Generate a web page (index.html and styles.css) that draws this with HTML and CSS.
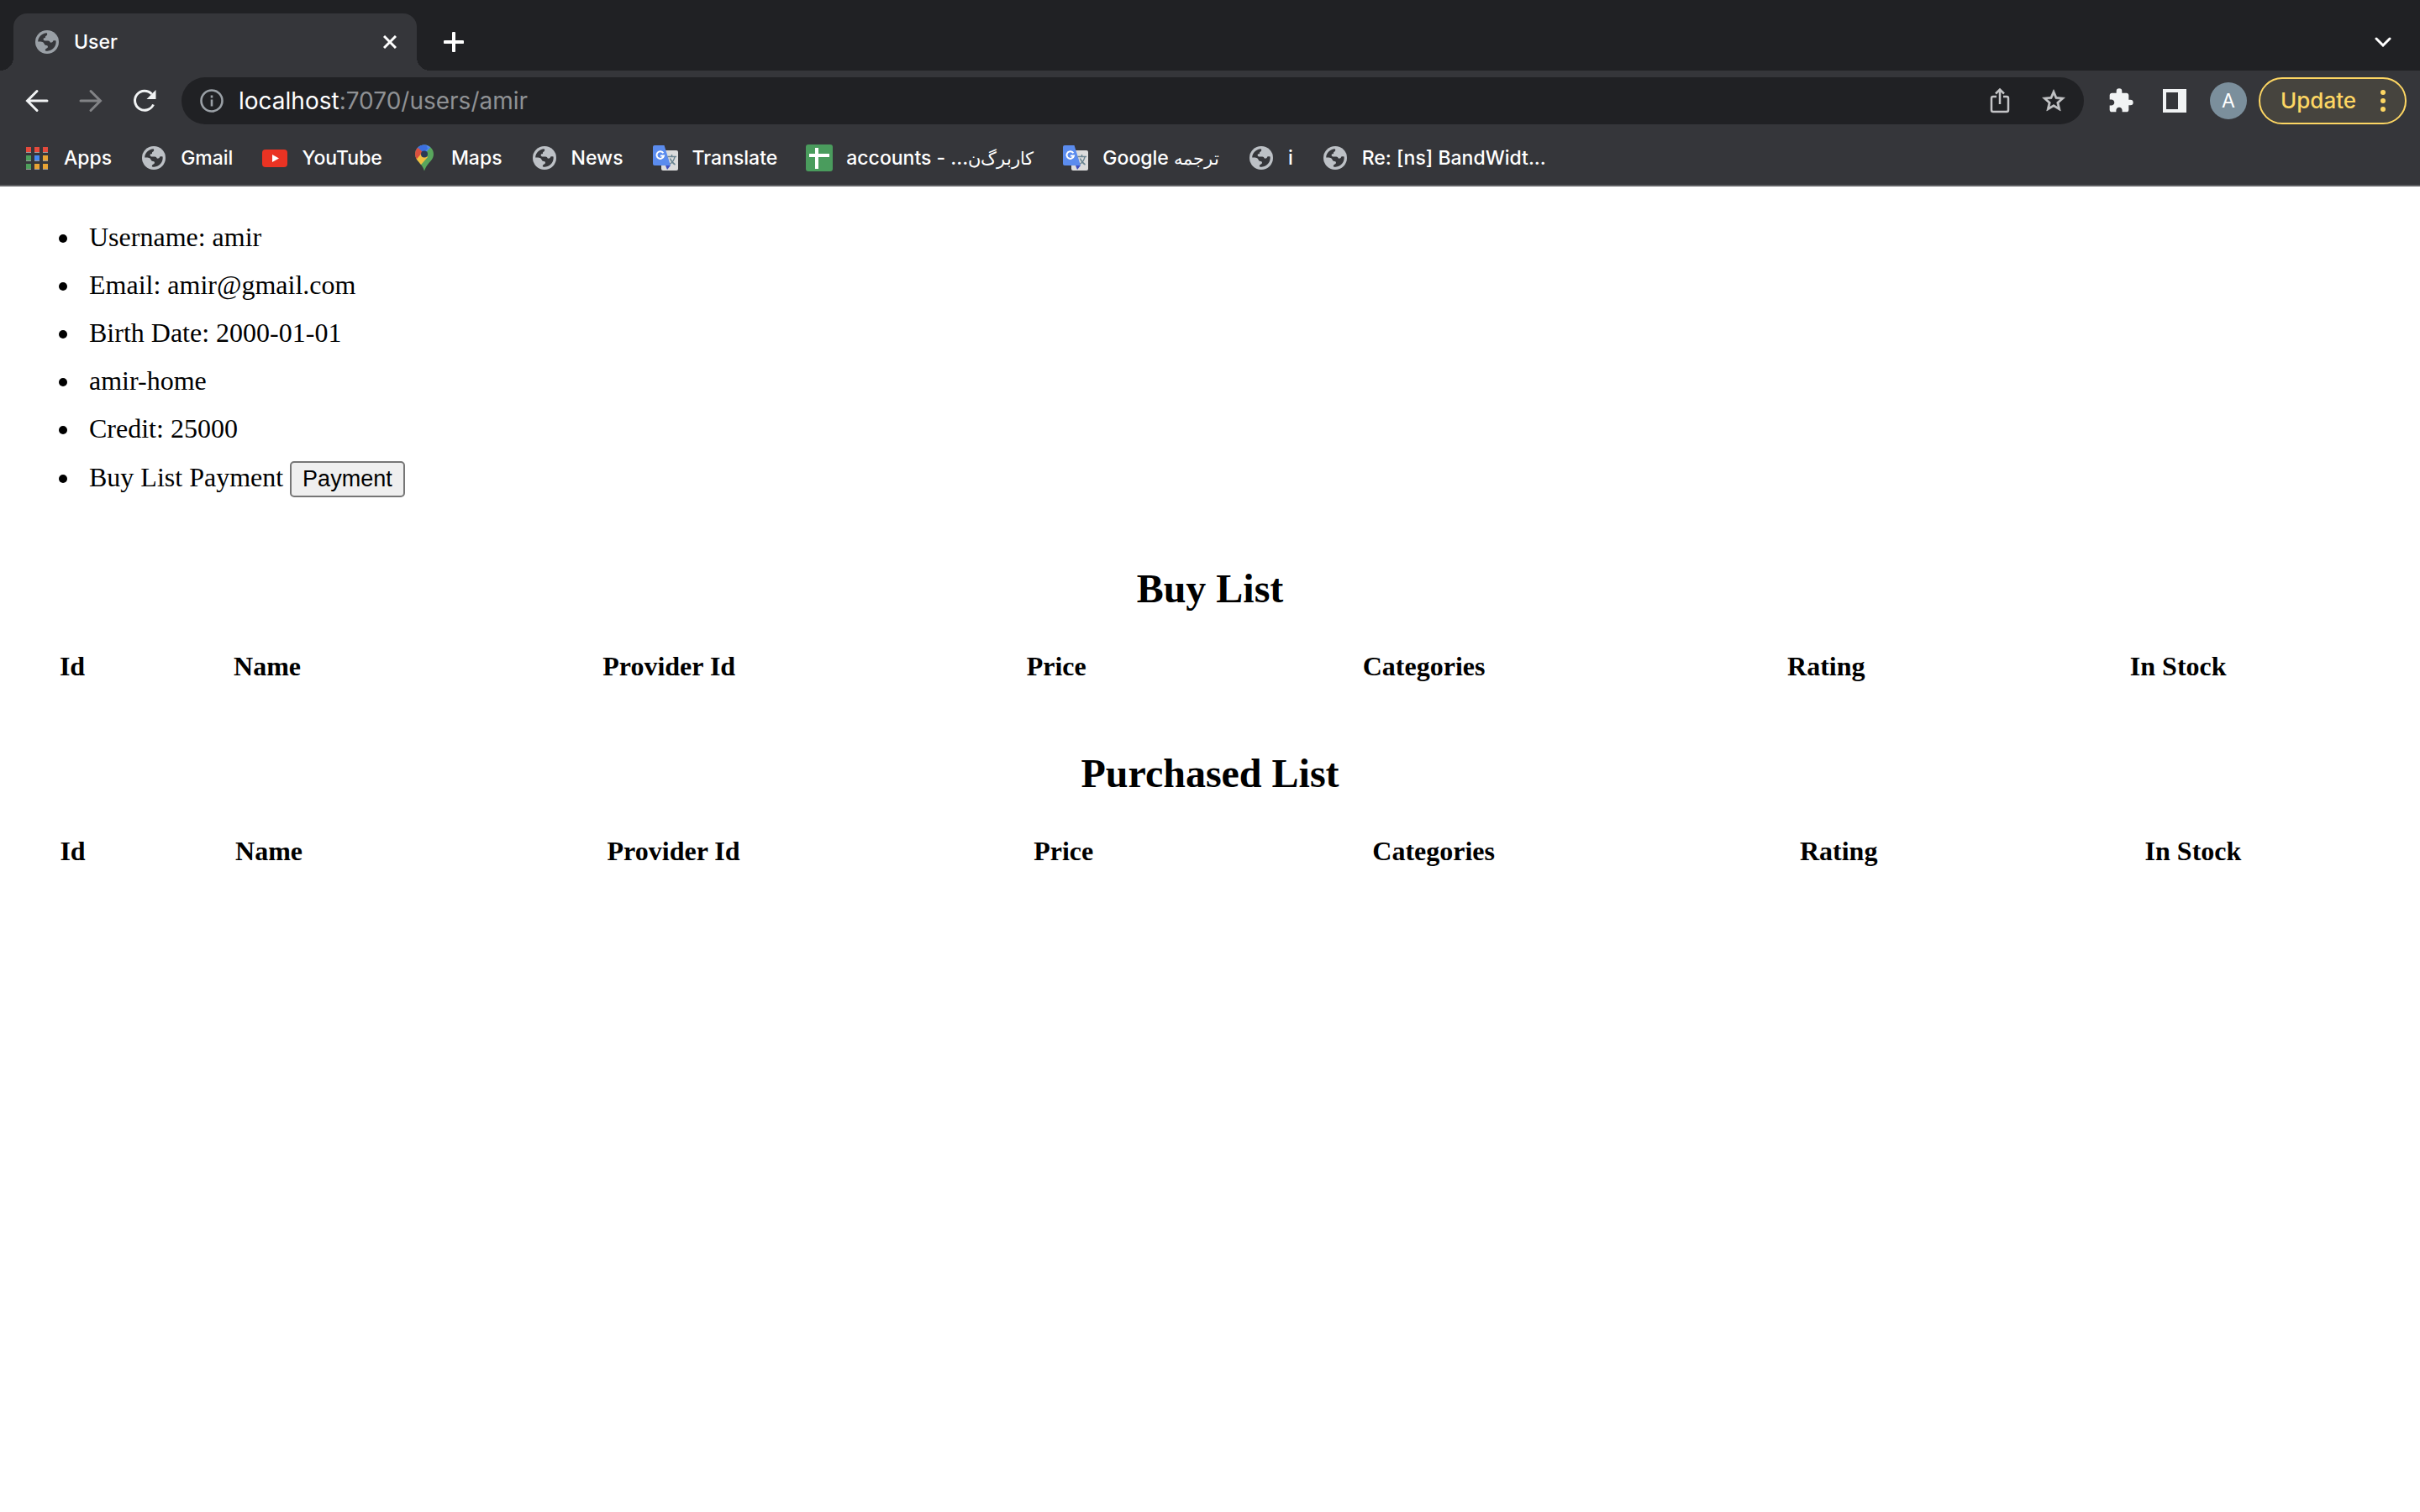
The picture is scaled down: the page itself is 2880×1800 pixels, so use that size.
FILE: index.html
```html
<!DOCTYPE html>
<html lang="en">
<head>
<meta charset="utf-8">
<title>User</title>
<link rel="stylesheet" href="styles.css">
</head>
<body>
<svg class="defs" aria-hidden="true">
  <symbol id="globe" viewBox="0 0 28 28">
    <circle cx="14" cy="14" r="14" fill="currentColor"/>
    <path class="cut" d="M3.2 13.6C3.2 8 8 3.4 13.6 3.2c1 .6.8 2.600-.4 3.200-1.600.8-1.200 1.600-1.200 2.600-1 .2-2.400.2-2.400 1.600 0 1.200.6 1.800 1.800 1.800h3.800c1.600 0 2.400 1.200 2.600 2.200 1.800.2 3-.4 3.200-1.600.2-1 1.800-1 3.600-.4.8 6-3.600 11.800-10.200 12.200-1.800 0-2.800-.4-2.600-1.400.2-1.400 2.200-1.600 3-2.800.6-1.200-.2-2.600-1.600-2.600-2 0-2.200-1.600-3-2.600-.8-1-2.200-1.800-3.800-1.800z"/>
  </symbol>
  <symbol id="translate" viewBox="0 0 30 30">
    <rect x="10" y="6" width="20" height="24" rx="2" fill="#dcdcdc"/>
    <path d="M15 24h6l-4 5z" fill="#3f4fc0"/>
    <path d="M2 0h11.500L21 24H2a2 2 0 0 1-2-2V2a2 2 0 0 1 2-2z" fill="#5b8cee"/>
    <path d="M12.400 9.200A4.300 4.300 0 1 0 13 12.500H9" fill="none" stroke="#fff" stroke-width="2"/>
    <path d="M17.500 13.500H28M22.500 11v2.500M26 13.500c-.5 3.500-3 7-6 9M20.500 15.500c1 3 3.500 6 6 7.500" fill="none" stroke="#6b8591" stroke-width="1.500"/>
  </symbol>
</svg>
<header class="browser">
  <div class="tabstrip">
    <div class="tab">
      <svg class="tab-icon"><use href="#globe"/></svg>
      <span class="tab-title">User</span>
      <button class="plain" aria-label="Close tab"><svg width="16" height="16" viewBox="0 0 16 16"><path d="M1 1l14 14M15 1L1 15" stroke="#fff" stroke-width="3"/></svg></button>
    </div>
    <button class="plain new-tab" aria-label="New tab"><svg width="24" height="24" viewBox="0 0 24 24"><path d="M12 1.500v21M1.500 12h21" stroke="#fff" stroke-width="4" stroke-linecap="round"/></svg></button>
    <button class="plain tab-search" aria-label="Search tabs"><svg width="20" height="12" viewBox="0 0 20 12"><path d="M2 2l8 8 8-8" fill="none" stroke="#fff" stroke-width="3" stroke-linecap="round"/></svg></button>
  </div>
  <div class="toolbar">
    <div class="nav">
      <button class="plain" aria-label="Back"><svg width="28" height="28" viewBox="0 0 28 28"><path d="M26 14H3M14 2.500L2.500 14 14 25.500" fill="none" stroke="#f1f3f4" stroke-width="3" stroke-linecap="round"/></svg></button>
      <button class="plain" aria-label="Forward"><svg width="28" height="28" viewBox="0 0 28 28"><path d="M2 14h23M14 2.500L25.500 14 14 25.500" fill="none" stroke="#828386" stroke-width="3" stroke-linecap="round"/></svg></button>
      <button class="plain" aria-label="Reload"><svg width="28" height="28" viewBox="0 0 28 28"><path d="M24.500 18.500A11.500 11.500 0 1 1 22.500 6" fill="none" stroke="#f1f3f4" stroke-width="3"/><path d="M27.500 1v11h-11z" fill="#f1f3f4"/></svg></button>
    </div>
    <div class="omnibox">
      <svg width="28" height="28" viewBox="0 0 28 28"><circle cx="14" cy="14" r="12.500" fill="none" stroke="#9aa0a6" stroke-width="2.600"/><path d="M14 12.500v8M14 7.500v3" stroke="#9aa0a6" stroke-width="2.600"/></svg>
      <div class="url"><span class="host">localhost</span>:7070/users/amir</div>
      <button class="plain" aria-label="Share"><svg width="24" height="32" viewBox="0 0 24 32"><path d="M8 11H4a2 2 0 0 0-2 2v14a2 2 0 0 0 2 2h16a2 2 0 0 0 2-2V13a2 2 0 0 0-2-2h-4M12 20V3M7 7.500l5-5 5 5" fill="none" stroke="#c3c4c6" stroke-width="2.500"/></svg></button>
      <button class="plain star" aria-label="Bookmark this page"><svg width="32" height="32" viewBox="0 0 24 24"><path d="M22 9.240l-7.190-.620L12 2 9.190 8.630 2 9.240l5.460 4.730L5.820 21 12 17.270 18.180 21l-1.630-7.030zM12 15.400l-3.760 2.270 1-4.280-3.320-2.880 4.380-.380L12 6.100l1.710 4.040 4.380.380-3.320 2.880 1 4.280z" fill="#c3c4c6" stroke="#c3c4c6" stroke-width=".5"/></svg></button>
    </div>
    <button class="plain" aria-label="Extensions"><svg width="32" height="32" viewBox="0 0 24 24"><path d="M20.500 11H19V7c0-1.100-.9-2-2-2h-4V3.500a2.500 2.500 0 0 0-5 0V5H4c-1.100 0-1.990.9-1.990 2v3.800H3.500c1.490 0 2.700 1.210 2.700 2.700s-1.210 2.700-2.700 2.700H2V20c0 1.100.9 2 2 2h3.800v-1.500c0-1.490 1.210-2.700 2.700-2.700s2.700 1.210 2.700 2.700V22H17c1.100 0 2-.9 2-2v-4h1.500a2.500 2.500 0 0 0 0-5z" fill="#f1f3f4"/></svg></button>
    <button class="plain" aria-label="Side panel"><svg width="28" height="28" viewBox="0 0 28 28"><path d="M0 0h28v28H0zM4 4v20h14V4z" fill="#f1f3f4" fill-rule="evenodd"/></svg></button>
    <button class="avatar" aria-label="Profile">A</button>
    <button class="update">Update<svg width="6" height="26" viewBox="0 0 6 26"><g fill="#fdd663"><circle cx="3" cy="3" r="3"/><circle cx="3" cy="13" r="3"/><circle cx="3" cy="23" r="3"/></g></svg></button>
  </div>
  <nav class="bookmarks">
    <a href="#"><svg viewBox="0 0 32 32"><path d="M3 9h6v1H3zM13 9h6v1h-6zM23 9h6v1h-6zM3 19h6v1H3zM13 19h6v1h-6zM23 19h6v1h-6zM3 29h6v1H3zM13 29h6v1h-6zM23 29h6v1h-6z" fill="#9a9b9d"/><path d="M3 3h6v6H3zM13 3h6v6h-6zM23 3h6v6h-6z" fill="#e44a3c"/><path d="M3 13h6v6H3zM3 23h6v6H3z" fill="#4e9e5b"/><path d="M13 13h6v6h-6z" fill="#4588f0"/><path d="M23 13h6v6h-6zM13 23h6v6h-6zM23 23h6v6h-6z" fill="#e8a334"/></svg>Apps</a>
    <a href="#"><svg class="globe" viewBox="-2 -2 32 32"><use href="#globe" width="28" height="28"/></svg>Gmail</a>
    <a href="#"><svg viewBox="0 0 32 32"><rect x="1" y="6" width="30" height="21" rx="4" fill="#ea3323"/><path d="M13 12v9l8-4.500z" fill="#fff"/></svg>YouTube</a>
    <a href="#"><svg viewBox="0 0 32 32"><clipPath id="pin"><path d="M16 0.500a11 11 0 0 1 11 11c0 8-8 10-11 20-3-10-11-12-11-20a11 11 0 0 1 11-11z"/></clipPath><g clip-path="url(#pin)"><path d="M0 0h32v32H0z" fill="#58a65c"/><path d="M16 11.500L30-4H5l-1 6z" fill="#4f86ec"/><path d="M4 0h14l2 5-8 8-9-7z" fill="#3b6fe0"/><path d="M14 9l6 6-10.500 12L4 18z" fill="#f2bf42"/><path d="M3 0l5.500 4L14 9 5.500 19 3 18z" fill="#d9503f"/></g><circle cx="16" cy="11.500" r="4" fill="#2d3a55"/></svg>Maps</a>
    <a href="#"><svg class="globe" viewBox="-2 -2 32 32"><use href="#globe" width="28" height="28"/></svg>News</a>
    <a href="#"><svg viewBox="-1 -1 32 32"><use href="#translate" width="30" height="30"/></svg>Translate</a>
    <a href="#"><svg viewBox="0 0 32 32"><rect width="32" height="32" rx="3" fill="#4a9c5d"/><path d="M13 4v25M4 13h24" stroke="#fff" stroke-width="4"/></svg><span>accounts - ...<bdi>کاربرگ‌ن</bdi></span></a>
    <a href="#"><svg viewBox="-1 -1 32 32"><use href="#translate" width="30" height="30"/></svg><span>Google <bdi>ترجمه</bdi></span></a>
    <a href="#"><svg class="globe" viewBox="-2 -2 32 32"><use href="#globe" width="28" height="28"/></svg>i</a>
    <a href="#"><svg class="globe" viewBox="-2 -2 32 32"><use href="#globe" width="28" height="28"/></svg>Re: [ns] BandWidt...</a>
  </nav>
</header>
<main class="page">
  <ul class="profile">
    <li>Username: amir</li>
    <li>Email: amir@gmail.com</li>
    <li>Birth Date: 2000-01-01</li>
    <li>amir-home</li>
    <li>Credit: 25000</li>
    <li><label for="pay">Buy List Payment</label> <button id="pay" class="pay">Payment</button></li>
  </ul>
  <table class="list">
    <caption>Buy List</caption>
    <thead><tr><th>Id</th><th>Name</th><th>Provider Id</th><th>Price</th><th>Categories</th><th>Rating</th><th>In Stock</th><th></th><th></th></tr></thead>
  </table>
  <table class="list">
    <caption>Purchased List</caption>
    <thead><tr><th>Id</th><th>Name</th><th>Provider Id</th><th>Price</th><th>Categories</th><th>Rating</th><th>In Stock</th><th></th></tr></thead>
  </table>
</main>
</body>
</html>
```
FILE: styles.css
```css
* { box-sizing: border-box; }
body {
  margin: 0;
  background: #fff;
  color: #000;
  font: 32px/37px "Liberation Serif", "Times New Roman", serif;
}
.defs { position: absolute; width: 0; height: 0; }
svg { display: block; flex: none; }
.cut { fill: #35363a; }

/* Browser chrome */
.browser {
  background: #35363a;
  border-bottom: 2px solid #5f6063;
  color: #fff;
  font: 500 23px/32px Inter, "Noto Sans", sans-serif;
}
.plain {
  display: flex;
  padding: 0;
  border: 0;
  background: none;
}
.tabstrip {
  display: flex;
  align-items: center;
  height: 84px;
  padding: 16px 34px 0 16px;
  background: #202124;
}
.tab {
  position: relative;
  display: flex;
  align-items: center;
  gap: 18px;
  width: 480px;
  height: 68px;
  padding: 0 24px 0 26px;
  border-radius: 16px 16px 0 0;
  background: #35363a;
}
.tab::before,
.tab::after {
  content: "";
  position: absolute;
  bottom: 0;
  width: 16px;
  height: 16px;
}
.tab::before { right: 100%; background: radial-gradient(circle at 0 0, #202124 16px, #35363a 16px); }
.tab::after { left: 100%; background: radial-gradient(circle at 100% 0, #202124 16px, #35363a 16px); }
.tab-icon { width: 28px; height: 28px; color: #9aa0a6; }
.tab-title { flex: 1; }
.new-tab { margin-left: 32px; }
.tab-search { margin-left: auto; }

.toolbar {
  display: flex;
  align-items: center;
  height: 72px;
  padding: 0 16px 0 30px;
}
.nav { display: flex; gap: 36px; margin-right: 30px; }
.omnibox {
  flex: 1;
  display: flex;
  align-items: center;
  height: 56px;
  margin-right: 28px;
  padding: 0 20px 0 22px;
  border-radius: 28px;
  background: #202124;
  font-size: 28px;
  font-weight: 400;
}
.url { flex: 1; margin-left: 18px; color: #8f9194; }
.host { color: #fff; }
.star { margin-left: 36px; }
.avatar {
  width: 44px;
  height: 44px;
  margin: 0 14px 0 28px;
  padding: 0;
  border: 0;
  border-radius: 50%;
  background: #7b8f9c;
  color: #fff;
  font: 23px/44px Inter, sans-serif;
}
.toolbar > .plain + .plain { margin-left: 34px; }
.update {
  display: flex;
  align-items: center;
  justify-content: space-between;
  width: 176px;
  height: 56px;
  padding: 0 23px 0 24px;
  border: 2px solid #fdd663;
  border-radius: 28px;
  background: #46443e;
  color: #fdd663;
  font: 500 26px/32px Inter, sans-serif;
}
.bookmarks {
  display: flex;
  align-items: center;
  gap: 34px;
  height: 64px;
  padding: 0 28px;
}
.bookmarks a {
  display: flex;
  align-items: center;
  gap: 16px;
  color: #fff;
  text-decoration: none;
  white-space: nowrap;
}
.bookmarks svg { width: 32px; height: 32px; }
.bookmarks .globe { color: #bdc1c6; }
.bookmarks bdi { font-size: 21px; }

/* Page */
.page { padding: 32px 16px; }
.profile { margin: 0; padding: 10px 0 6px 80px; }
.profile li { margin-bottom: 20px; padding-left: 10px; }
.profile li:last-child { margin-bottom: 0; }
.pay {
  height: 43px;
  padding: 0 13px;
  border: 2px solid #767676;
  border-radius: 5px;
  background: #efefef;
  color: #000;
  font: 27px/37px "Liberation Sans", Arial, sans-serif;
}
.list {
  width: 100%;
  margin-top: 75px;
  border-spacing: 4px;
}
.list caption {
  margin-bottom: 40px;
  font-size: 48px;
  font-weight: bold;
  line-height: 56px;
}
.list th { padding: 2px; }
```
